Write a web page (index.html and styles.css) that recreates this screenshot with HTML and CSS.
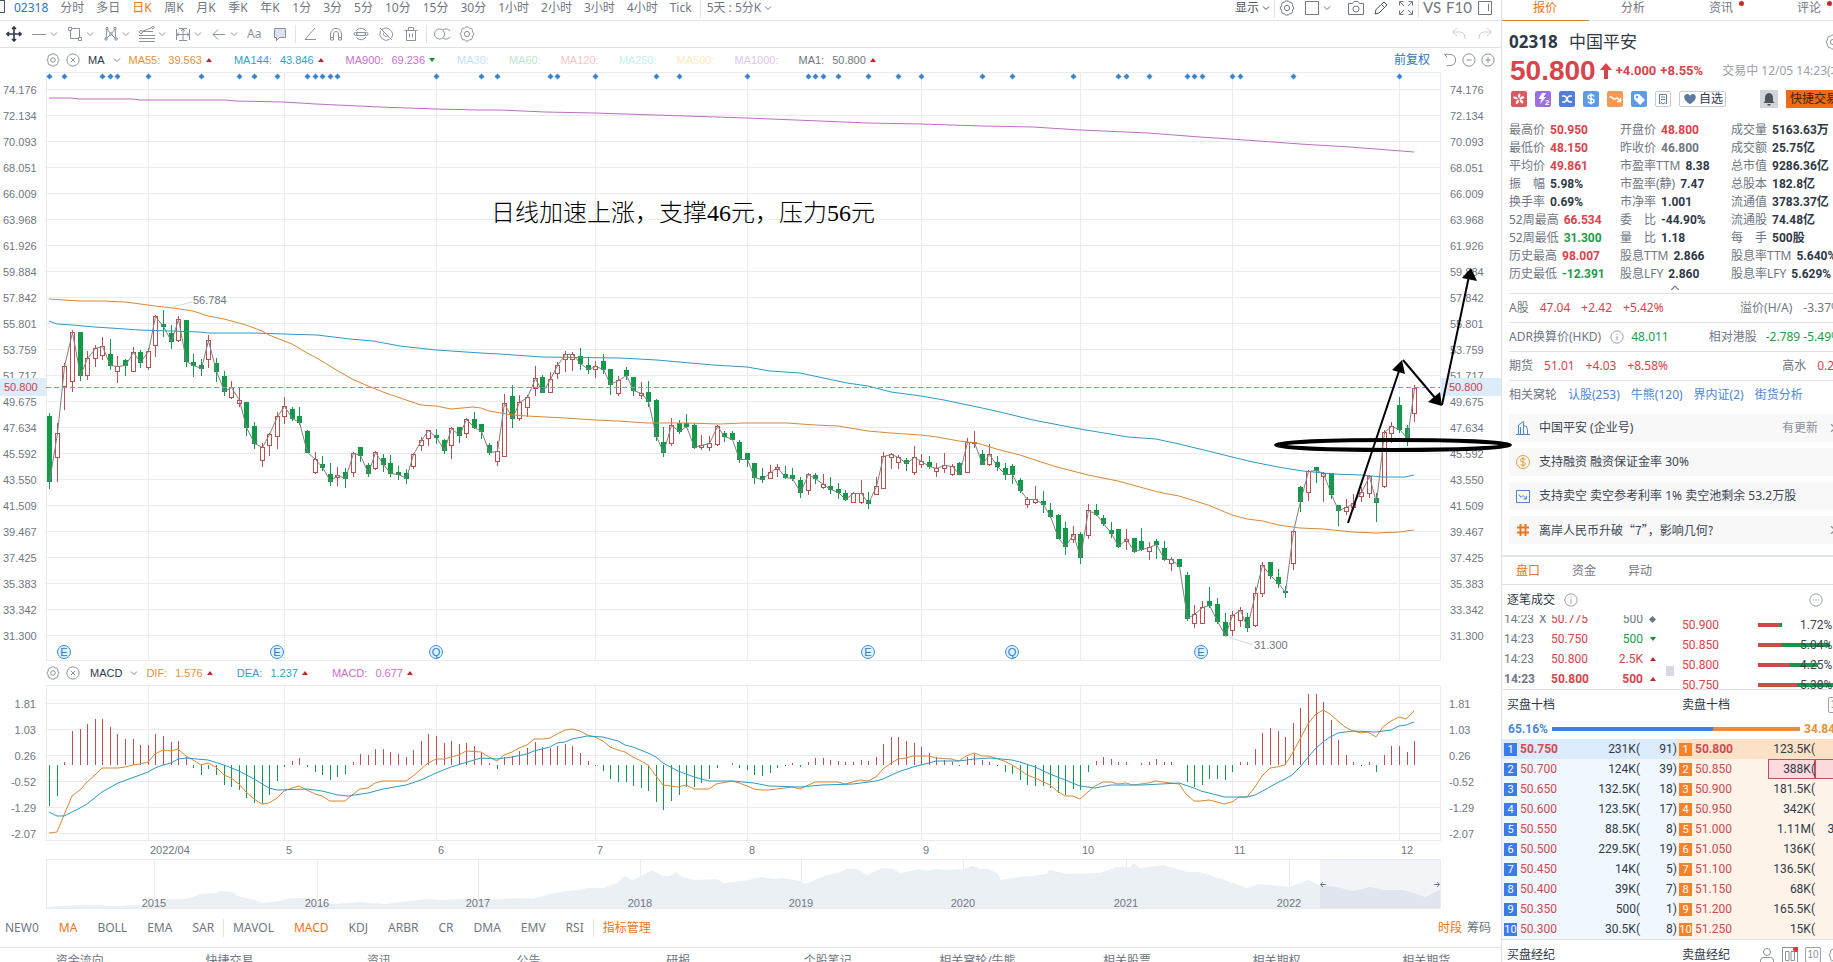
FILE: index.html
```
<!DOCTYPE html>
<html lang="zh-CN">
<head>
    <meta charset="UTF-8">
    <meta name="viewport" content="width=device-width, initial-scale=1.0">
    <title>02318 中国平安</title>
    <link rel="stylesheet" href="styles.css">
</head>
<body>

    <!-- Icones reutilizados -->
    <svg class="symbols" aria-hidden="true">
        <symbol id="i-chev" viewBox="0 0 8 8"><path d="M1 2.500 4 5.500 7 2.500"/></symbol>
        <symbol id="i-gear" viewBox="0 0 16 16"><path d="M5.500 2.200 6.800 1h2.400l1.300 1.200 1.800.1 1.200 2 .1 1.600L15 8l-1.400 2.100-.1 1.600-1.200 2-1.800.1L9.200 15H6.800l-1.300-1.200-1.800-.1-1.200-2-.1-1.600L1 8l1.400-2.100.1-1.600 1.200-2z"/><circle cx="8" cy="8" r="2.600"/></symbol>
        <symbol id="i-close" viewBox="0 0 16 16"><circle cx="8" cy="8" r="7"/><path d="M5.500 5.500l5 5M10.500 5.500l-5 5"/></symbol>
        <symbol id="i-info" viewBox="0 0 16 16"><circle cx="8" cy="8" r="7"/><path d="M8 4v1.500M8 7v5"/></symbol>
        <symbol id="i-panel" viewBox="0 0 16 16"><path d="M1.500 1.500h13v13h-13zM11.500 4v7"/></symbol>
    </svg>

    <div class="app">
        <main class="chart-side">

            <nav class="periods">
                <span class="edge"></span>
                <a class="code" href="#">02318</a>
                <a href="#">分时</a><a href="#">多日</a><a class="k on" href="#">日K</a><a class="k" href="#">周K</a><a class="k" href="#">月K</a><a class="k" href="#">季K</a><a class="k" href="#">年K</a><a href="#">1分</a><a href="#">3分</a><a href="#">5分</a><a href="#">10分</a><a href="#">15分</a><a href="#">30分</a><a href="#">1小时</a><a href="#">2小时</a><a href="#">3小时</a><a href="#">4小时</a><a href="#">Tick</a>
                <i class="sep"></i>
                <a class="days" href="#">5天 : 5分K <svg class="chev"><use href="#i-chev"/></svg></a>
                <div class="view-tools">
                    <button class="pair dark">显示 <svg class="chev"><use href="#i-chev"/></svg></button>
                    <i class="sep"></i>
                    <button aria-label="设置"><svg><use href="#i-gear"/></svg></button>
                    <button class="pair" aria-label="窗口"><svg viewBox="0 0 16 16"><path d="M1.500 1.500h13v13h-13z"/></svg><svg class="chev"><use href="#i-chev"/></svg></button>
                    <button class="camera" aria-label="截图"><svg viewBox="0 0 16 16"><path d="M.5 3.500h4l1.500-2h4l1.500 2h4v11H.5z"/><circle cx="8" cy="9" r="3"/></svg></button>
                    <button class="dark" aria-label="画图"><svg viewBox="0 0 16 16"><path d="M2 14l1-4.500L11 2l3 3-8 8zM8.500 4.500l3 3"/></svg></button>
                    <button aria-label="全屏"><svg viewBox="0 0 16 16"><path d="M1.500 5.500v-4h4M2 2l4 4M10.500 1.500h4v4M14 2l-4 4M1.500 10.500v4h4M2 14l4-4M14.500 10.500v4h-4M14 14l-4-4"/></svg></button>
                    <i class="sep"></i>
                    <button class="big">VS</button>
                    <button class="big">F10</button>
                    <button aria-label="侧栏"><svg><use href="#i-panel"/></svg></button>
                </div>
            </nav>

            <div class="draw-tools">
                <button class="dark" aria-label="移动"><svg viewBox="0 0 16 16"><path stroke-width="1.600" d="M8 1v14M1 8h14M6 3l2-2 2 2M6 13l2 2 2-2M3 6 1 8l2 2M13 6l2 2-2 2"/></svg></button>
                <button class="pair" aria-label="直线"><svg viewBox="0 0 16 16"><path d="M1 8.500h14"/></svg><svg class="chev"><use href="#i-chev"/></svg></button>
                <button class="pair" aria-label="矩形"><svg viewBox="0 0 16 16"><path d="M3.500 2.500h9v10h-9z"/><path class="node" d="M1.500 1.500h3v3h-3zM11.500 11.500h3v3h-3z"/></svg><svg class="chev"><use href="#i-chev"/></svg></button>
                <button class="pair" aria-label="形态"><svg viewBox="0 0 16 16"><path d="M3 13 4 3l4 5 4-5 1 10-5-5z"/><path class="node" d="M3 1.500h2v2H3zM11 1.500h2v2h-2zM2 12h2v2H2zM12 12h2v2h-2zM7 7h2v2H7z"/></svg><svg class="chev"><use href="#i-chev"/></svg></button>
                <button class="pair" aria-label="斐波那契"><svg viewBox="0 0 16 16"><path d="M3 5.500 13 1.500M0 9.500h16M0 12.500h16M0 15.500h16M4 5.500h10"/><circle cx="2" cy="6" r="1.500"/><circle cx="14" cy="1.500" r="1.300"/></svg><svg class="chev"><use href="#i-chev"/></svg></button>
                <button class="pair" aria-label="测量"><svg viewBox="0 0 16 16"><path d="M1.500 3v11M14.500 3v11M2 8.500h12M8 2v12M4 2.500h8M4 14.500h8M6 5l2-2 2 2M12 6.500l2 2-2 2M4 6.500l-2 2 2 2"/></svg><svg class="chev"><use href="#i-chev"/></svg></button>
                <button class="pair" aria-label="箭头"><svg viewBox="0 0 16 16"><path d="M14 8.500H2M7 3.500l-5 5 5 5"/></svg><svg class="chev"><use href="#i-chev"/></svg></button>
                <button class="aa">Aa</button>
                <button aria-label="批注"><svg viewBox="0 0 16 16"><path class="bubble" d="M2.500 2.500h11v9h-6L4.500 14.500v-3h-2z"/></svg></button>
                <i class="sep"></i>
                <button aria-label="角度"><svg viewBox="0 0 16 16"><path d="M12 2 2 13.500h11"/></svg></button>
                <button aria-label="磁铁"><svg viewBox="0 0 16 16"><path d="M2.500 14V8a5.500 5.500 0 0 1 11 0v6h-3V8a2.500 2.500 0 0 0-5 0v6zM2.500 11.500h3M10.500 11.500h3"/></svg></button>
                <button aria-label="连续画图"><svg viewBox="0 0 16 16"><path d="M3 5a6 6 0 0 1 10 0M13 11A6 6 0 0 1 3 11M3.500 6.500h9v3h-9z"/><circle cx="2.500" cy="8" r="1.500"/><circle cx="13.500" cy="8" r="1.500"/></svg></button>
                <button aria-label="隐藏"><svg viewBox="0 0 16 16"><path d="M4 3.500a6.500 6.500 0 0 1 9.500 8.500M11.500 13.500A6.500 6.500 0 0 1 2.500 5M2 2l12 12M6 6.500a2.500 2.500 0 0 0 3.500 3.500"/></svg></button>
                <button aria-label="删除"><svg viewBox="0 0 16 16"><path d="M1.500 4.500h13M5.500 4V1.500h5V4M3.500 5v9.500h9V5M6.500 7.500v4M9.500 7.500v4"/></svg></button>
                <i class="sep"></i>
                <button aria-label="对比"><svg viewBox="0 0 16 16"><circle cx="5.500" cy="8" r="5"/><path d="M9 4a5 5 0 1 1 0 8"/></svg></button>
                <button aria-label="画图设置"><svg><use href="#i-gear"/></svg></button>
                <div class="history">
                    <button aria-label="撤销"><svg viewBox="0 0 16 16"><path d="M6 2 1.500 6 6 10M2 6h7q5 0 5 7"/></svg></button>
                    <button aria-label="重做"><svg viewBox="0 0 16 16"><path d="M10 2l4.500 4L10 10M14 6H7q-5 0-5 7"/></svg></button>
                </div>
            </div>

            <div class="legend">
                <button aria-label="指标设置"><svg><use href="#i-gear"/></svg></button>
                <button aria-label="关闭指标"><svg><use href="#i-close"/></svg></button>
                <button class="pick">MA <svg class="chev"><use href="#i-chev"/></svg></button>
                <span class="val orange">MA55: <b>39.563</b><i class="up"></i></span>
                <span class="val cyan">MA144: <b>43.846</b><i class="up"></i></span>
                <span class="val violet">MA900: <b>69.236</b><i class="down"></i></span>
                <span class="val faded ma30">MA30:</span>
                <span class="val faded ma60">MA60:</span>
                <span class="val faded ma120">MA120:</span>
                <span class="val faded ma250">MA250:</span>
                <span class="val faded ma500">MA500:</span>
                <span class="val faded ma1000">MA1000:</span>
                <span class="val">MA1: <b>50.800</b><i class="up"></i></span>
                <div class="zoom-tools">
                    <a href="#">前复权</a>
                    <button aria-label="还原"><svg viewBox="0 0 16 16"><path d="M2 1.500h6a6 6 0 0 1 0 13H4M5 5 1.500 1.500"/></svg></button>
                    <button aria-label="缩小"><svg viewBox="0 0 16 16"><circle cx="8" cy="8" r="7"/><path d="M5 8h6"/></svg></button>
                    <button aria-label="放大"><svg viewBox="0 0 16 16"><circle cx="8" cy="8" r="7"/><path d="M5 8h6M8 5v6"/></svg></button>
                </div>
            </div>

            <svg id="price" class="plot" viewBox="0 72 1501 589"></svg>

            <div class="legend macd">
                <button aria-label="指标设置"><svg><use href="#i-gear"/></svg></button>
                <button aria-label="关闭指标"><svg><use href="#i-close"/></svg></button>
                <button class="pick">MACD <svg class="chev"><use href="#i-chev"/></svg></button>
                <span class="val orange">DIF: <b>1.576</b><i class="up"></i></span>
                <span class="val cyan">DEA: <b>1.237</b><i class="up"></i></span>
                <span class="val violet">MACD: <b>0.677</b><i class="up"></i></span>
            </div>

            <svg id="macd" class="plot" viewBox="0 685 1501 224"></svg>

            <nav class="indicators">
                <a href="#">NEW0</a><a class="on" href="#">MA</a><a href="#">BOLL</a><a href="#">EMA</a><a href="#">SAR</a>
                <i class="sep"></i>
                <a href="#">MAVOL</a><a class="on" href="#">MACD</a><a href="#">KDJ</a><a href="#">ARBR</a><a href="#">CR</a><a href="#">DMA</a><a href="#">EMV</a><a href="#">RSI</a>
                <i class="sep"></i>
                <a class="on" href="#">指标管理</a>
                <span class="range"><a class="on" href="#">时段</a><a href="#">筹码</a></span>
            </nav>

            <nav class="bottom-tabs">
                <a href="#">资金流向</a><a href="#">快捷交易</a><a href="#">资讯</a><a href="#">公告</a><a href="#">研报</a><a href="#">个股笔记</a><a href="#">相关窝轮/牛熊</a><a href="#">相关股票</a><a href="#">相关期权</a><a href="#">相关期货</a>
            </nav>
        </main>

        <aside class="quote">
          <div class="quote-body">
            <nav class="quote-tabs">
                <a class="on" href="#">报价</a><a href="#">分析</a><a class="dot" href="#">资讯</a><a class="dot" href="#">评论</a>
            </nav>

            <header class="stock">
                <h1>02318 <span>中国平安</span></h1>
                <button aria-label="报价设置"><svg><use href="#i-gear"/></svg></button>
            </header>

            <div class="last">
                <strong>50.800</strong>
                <svg class="rise" viewBox="0 0 12 16"><path d="M6 0l6 7H8v9H4V7H0z"/></svg>
                <b>+4.000</b><b>+8.55%</b>
                <time>交易中 12/05 14:23(北京)</time>
            </div>

            <div class="badges">
                <svg class="b-red" viewBox="0 0 16 16"><path class="fill" d="M8 7.500C6 5 7 3 9 2.500c1 1.500 0 3.500-1 5zM8.500 8c1-3 3.500-3.500 5-2-.5 2-3 2.500-5 2zM8.500 8.500c3 0 4.500 2 3.500 4-2 0-3.500-2-3.500-4zM7.500 8.500c1 3-.5 4.500-2.500 4.500-.5-2 .5-4 2.500-4.500zM7 8C4 9 2 7.500 2.500 5.500c2-.5 4 1 4.500 2.500z"/></svg>
                <svg class="b-violet" viewBox="0 0 16 16"><path class="fill" d="M7 2h4L8.500 6H11l-6 7 1.500-5H3.500z"/><text x="10" y="14">2</text></svg>
                <svg class="b-blue" viewBox="0 0 16 16"><path stroke-width="1.500" d="M3 5h2q2 0 3 3t3 3h2M3 11h2q2 0 3-3t3-3h2"/></svg>
                <svg class="b-sky" viewBox="0 0 16 16"><path stroke-width="1.500" d="M11 5.500Q10.500 4 8 4 5 4 5 6t3 2 3 2-3 2Q5.500 12 5 10.500M8 2.500v11"/></svg>
                <svg class="b-orange" viewBox="0 0 16 16"><path stroke-width="1.500" d="M2.500 6.500Q4 5 5 6.500T8 8l2-1 3.500 3M13.500 7v3.500H10"/></svg>
                <svg class="b-sky" viewBox="0 0 16 16"><path class="fill" d="M3 3.500 8 3l6 6-5 5-6-6z"/><circle class="hole" cx="6" cy="6" r="1.200"/></svg>
                <svg class="b-plain" viewBox="1 1 14 14"><path d="M4.500 3.500h7v9.500l-1.500-1.500-2 1.500-2-1.500L4.500 13zM6 6h4M6 8.500h4"/></svg>
                <button class="fav"><svg viewBox="0 0 16 16"><path d="M8 14C2 10 1 7 1.500 5 2.500 1.500 6.500 1.500 8 4.500 9.500 1.500 13.500 1.500 14.500 5c.5 2-.5 5-6.500 9z"/></svg>自选</button>
                <button class="bell" aria-label="提醒"><svg viewBox="0 0 16 16"><path d="M8 2q4 .5 4 5v3l1.500 2h-11L4 10V7q0-4.500 4-5zM6.500 13h3v1.500h-3z"/></svg></button>
                <button class="trade">快捷交易</button>
            </div>

            <dl class="stats">
                <div><dt>最高价</dt><dd class="red">50.950</dd></div><div><dt>开盘价</dt><dd class="red">48.800</dd></div><div><dt>成交量</dt><dd>5163.63万</dd></div>
                <div><dt>最低价</dt><dd class="red">48.150</dd></div><div><dt>昨收价</dt><dd class="grey">46.800</dd></div><div><dt>成交额</dt><dd>25.75亿</dd></div>
                <div><dt>平均价</dt><dd class="red">49.861</dd></div><div><dt>市盈率TTM</dt><dd>8.38</dd></div><div><dt>总市值</dt><dd>9286.36亿</dd><dd><svg><use href="#i-info"/></svg></dd></div>
                <div><dt>振　幅</dt><dd>5.98%</dd></div><div><dt>市盈率(静)</dt><dd>7.47</dd></div><div><dt>总股本</dt><dd>182.8亿</dd></div>
                <div><dt>换手率</dt><dd>0.69%</dd></div><div><dt>市净率</dt><dd>1.001</dd></div><div><dt>流通值</dt><dd>3783.37亿</dd><dd><svg><use href="#i-info"/></svg></dd></div>
                <div><dt>52周最高</dt><dd class="red">66.534</dd></div><div><dt>委　比</dt><dd>-44.90%</dd></div><div><dt>流通股</dt><dd>74.48亿</dd></div>
                <div><dt>52周最低</dt><dd class="green">31.300</dd></div><div><dt>量　比</dt><dd>1.18</dd></div><div><dt>每　手</dt><dd>500股</dd></div>
                <div><dt>历史最高</dt><dd class="red">98.007</dd></div><div><dt>股息TTM</dt><dd>2.866</dd></div><div><dt>股息率TTM</dt><dd>5.640%</dd></div>
                <div><dt>历史最低</dt><dd class="green">-12.391</dd></div><div><dt>股息LFY</dt><dd>2.860</dd></div><div><dt>股息率LFY</dt><dd>5.629%</dd></div>
            </dl>
            <button class="fold" aria-label="收起"><svg class="chev"><use href="#i-chev"/></svg></button>

            <div class="line">A股 <span class="red">47.04</span><span class="red">+2.42</span><span class="red">+5.42%</span><span class="end">溢价(H/A)</span><span>-3.37%</span></div>
            <div class="line adr">ADR换算价(HKD) <svg><use href="#i-info"/></svg><span class="green">48.011</span><span class="end">相对港股</span><span class="green">-2.789 -5.49%</span></div>
            <div class="line">期货 <span class="red">51.01</span><span class="red">+4.03</span><span class="red">+8.58%</span><span class="end">高水</span><span class="red">0.21</span></div>
            <div class="line warrants">相关窝轮 <a href="#">认股(253)</a><a href="#">牛熊(120)</a><a href="#">界内证(2)</a><a href="#">街货分析</a></div>

            <ul class="cards">
                <li><svg class="blue" viewBox="0 0 16 16"><path d="M1 14.500h14M3.500 14V5l5-3.500V14M8.500 5.500q4 0 4 4V14M5.500 7v7"/></svg>中国平安 (企业号)<span>有更新</span><svg class="chev next"><use href="#i-chev"/></svg></li>
                <li><svg class="gold" viewBox="0 0 16 16"><circle cx="8" cy="8" r="6.500"/><path d="M10.500 6Q10 4.500 8 4.500 5.500 4.500 5.500 6.200T8 8t2.500 1.800T8 11.500q-2 0-2.500-1.500M8 3v10"/></svg>支持融资 融资保证金率 30%</li>
                <li><svg class="blue" viewBox="0 0 16 16"><path d="M1.500 2.500h13v12h-13zM4 6.500l2 3 2-2 3.500 3.500M11.500 8v3h-3"/></svg>支持卖空 卖空参考利率 1% 卖空池剩余 53.2万股</li>
                <li class="topic"><svg class="hash" viewBox="0 0 16 16"><path d="M5.500 2v12M10.500 2v12M2 5.500h12M2 10.500h12"/></svg>离岸人民币升破“7”，影响几何?<svg class="chev next"><use href="#i-chev"/></svg></li>
            </ul>

            <nav class="book-tabs"><a class="on" href="#">盘口</a><a href="#">资金</a><a href="#">异动</a></nav>

            <h2 class="head">逐笔成交 <svg><use href="#i-info"/></svg><svg class="more" viewBox="0 0 16 16"><circle cx="8" cy="8" r="7"/><path d="M4.500 8h1M7.500 8h1M10.500 8h1"/></svg></h2>

            <div class="deals">
                <table class="ticks">
                    <tr><td>14:23</td><td>X</td><td class="red">50.775</td><td>500</td><td><i class="flat"></i></td></tr>
                    <tr><td>14:23</td><td></td><td class="red">50.750</td><td class="green">500</td><td><i class="down"></i></td></tr>
                    <tr><td>14:23</td><td></td><td class="red">50.800</td><td class="red">2.5K</td><td><i class="up"></i></td></tr>
                    <tr class="bold"><td>14:23</td><td></td><td class="red">50.800</td><td class="red">500</td><td><i class="up"></i></td></tr>
                </table>
                <i class="thumb"></i>
                <table class="levels">
                    <tr><td class="red">50.900</td><td><i class="bar" style="--r:21px;--g:3px"></i></td><td>1.72%</td></tr>
                    <tr><td class="red">50.850</td><td><i class="bar" style="--r:24px;--g:48px"></i></td><td>5.04%</td></tr>
                    <tr><td class="red">50.800</td><td><i class="bar" style="--r:32px;--g:28px"></i></td><td>4.25%</td></tr>
                    <tr><td class="red">50.750</td><td><i class="bar" style="--r:39px;--g:37px"></i></td><td>5.38%</td></tr>
                </table>
            </div>

            <div class="halves"><h2>买盘十档</h2><h2>卖盘十档</h2><span class="lv">10</span></div>
            <div class="ratio"><b class="blue">65.16%</b><i class="buy" style="flex-grow:65"></i><i class="sell" style="flex-grow:35"></i><b class="orange">34.84%</b></div>

            <div class="book">
                <table class="bids" id="bids"></table>
                <table class="asks" id="asks"></table>
            </div>

            <div class="halves brokers"><h2>买盘经纪</h2><h2>卖盘经纪</h2>
                <div class="broker-tools">
                    <svg viewBox="0 0 16 16"><circle cx="8" cy="5" r="3.500"/><path d="M1.500 15.500v-2q0-3 3-3h7q3 0 3 3v2z"/></svg>
                    <svg class="boxed" viewBox="0 0 16 16"><path d="M.5.500h15v15H.5zM3.500 4.500h3.500v9H3.500zM9 4.500h3.500v9H9z"/><circle class="alert" cx="14" cy="2" r="3"/></svg>
                    <span class="lv">10</span>
                    <svg><use href="#i-gear"/></svg>
                </div>
            </div>
          </div>
        </aside>
    </div>

    <script src="chart.js"></script>
</body>
</html>
```
FILE: styles.css
```
* {
    box-sizing: border-box;
}
body {
    margin: 0;
    height: 100vh;
    overflow: hidden;
    font-family: "Noto Sans", "Noto Sans CJK SC", sans-serif;
    font-size: 12px;
    line-height: 16px;
    color: #6f7782;
    background: #fff;
}
a {
    color: inherit;
    text-decoration: none;
}
button {
    padding: 0;
    border: 0;
    background: none;
    font: inherit;
    color: inherit;
    display: flex;
    align-items: center;
    cursor: pointer;
}
svg {
    width: 16px;
    height: 16px;
    flex: none;
    fill: none;
    stroke: currentColor;
}
h1, h2, ul, dl, dd {
    margin: 0;
    padding: 0;
}
h2 {
    font-size: 12px;
    font-weight: normal;
    color: #2f3946;
}
.symbols {
    position: absolute;
    width: 0;
    height: 0;
}
.chev {
    width: 8px;
    height: 8px;
}
.sep {
    width: 1px;
    height: 18px;
    background: #dfe4ea;
    flex: none;
}
.on {
    color: #ee7420;
}
.red { color: #d9434a; }
.green { color: #1a9c4b; }
.orange { color: #e5923a; }
.cyan { color: #35a0c4; }
.violet { color: #cc6fcc; }
.blue { color: #4a86d8; }
.dark { color: #2f3946; }
.app {
    display: flex;
    height: 100%;
    white-space: nowrap;
}
.chart-side {
    flex: 1;
    min-width: 0;
}

/* barras superiores */
.periods {
    display: flex;
    gap: 12px;
    height: 21px;
    line-height: 15px;
    border-bottom: 1px solid #dfe3e8;
}
.edge {
    width: 5px;
    height: 13px;
    margin-right: -3px;
    border: 1px solid #4b5563;
    border-left: 0;
}
.periods .code {
    color: #2d74c4;
}
.k {
    width: 20px;
}
.periods > .sep {
    margin: 0 -6px 0 -4px;
}
.view-tools {
    display: flex;
    gap: 9px;
    height: 15px;
    margin-left: auto;
    padding-right: 8px;
}
.view-tools .sep {
    margin: 0 -5px;
}
.view-tools .dark {
    color: #4b5563;
}
.camera {
    margin-left: 8px;
}
.big {
    font-family: Lato, sans-serif;
    font-size: 15px;
    margin-right: -4px;
}
.pair {
    gap: 3px;
}
.draw-tools {
    display: flex;
    align-items: center;
    gap: 9px;
    height: 27px;
    padding: 0 8px 0 6px;
    border-bottom: 1px solid #dfe3e8;
    color: #8a929c;
}
.draw-tools .sep {
    margin: 0 -2px;
}
.aa {
    width: 16px;
}
.node {
    fill: #fff;
}
.bubble {
    fill: #dde3ea;
}
.history {
    display: flex;
    gap: 10px;
    margin-left: auto;
    color: #c8cdd4;
}

/* legendas dos indicadores */
.legend {
    display: flex;
    align-items: center;
    height: 24px;
    padding: 0 6px 0 46px;
    font-family: "Liberation Sans", "Noto Sans CJK SC", sans-serif;
    font-size: 11px;
}
.legend svg {
    width: 14px;
    height: 14px;
    margin-right: 6px;
    color: #7a8390;
}
.legend .pick {
    color: #2f3946;
    margin-right: 2px;
    margin-left: 2px;
}
.legend .chev {
    width: 8px;
    margin-left: 8px;
}
.val {
    display: flex;
    align-items: center;
    margin-right: 22px;
}
.faded {
    margin-right: 20px;
}
.val b {
    font-weight: normal;
    margin: 0 4px 0 8px;
}
.macd .pick {
    margin-left: 4px;
}
.macd .val {
    margin-right: 24px;
}
.up, .down {
    width: 0;
    border: 3px solid transparent;
}
.up {
    border-top: 0;
    border-bottom: 4px solid #c4242c;
}
.down {
    border-bottom: 0;
    border-top: 4px solid #12902c;
}
.ma30 { color: #c4dff5; }
.ma60 { color: #bfe5cc; }
.ma120 { color: #f6c6c6; }
.ma250 { color: #bff0ee; }
.ma500 { color: #f9eac0; }
.ma1000 { color: #dcc6ef; }
.zoom-tools {
    display: flex;
    align-items: center;
    gap: 5px;
    margin-left: auto;
}
.zoom-tools a {
    font-size: 12px;
    color: #2d74c4;
    margin-right: 8px;
}
.zoom-tools svg {
    margin: 0;
}

/* graficos */
.plot {
    display: block;
    position: relative;
    z-index: 1;
    width: 100%;
    height: auto;
    overflow: visible;
    stroke: none;
    font-family: "Liberation Sans", sans-serif;
    font-size: 11px;
}
.plot text { fill: #6f7782; stroke: none; }
.plot .mid { text-anchor: middle; }
.grid { stroke: #e9ecef; shape-rendering: crispEdges; }
.candle-up { stroke: #bd4f50; fill: #fff; shape-rendering: crispEdges; }
.candle-down { stroke: #14984a; fill: #14984a; shape-rendering: crispEdges; }
.ma-close { stroke: #808080; }
.ma-55 { stroke: #dd8732; }
.ma-144 { stroke: #2c9ac4; }
.ma-900 { stroke: #be6fc2; }
.now-line { stroke: #d08a3c; stroke-dasharray: 5 3; shape-rendering: crispEdges; }
.now-box { fill: #dcecfb; }
.plot .now { fill: #d33b4c; }
.diamond { fill: #3a86d2; }
.event circle { fill: #dff1fd; stroke: #3a8fd6; }
.event text { fill: #2d7cc8; text-anchor: middle; }
.leader { stroke: #d5d9dd; }
.plot .note {
    font-family: "Liberation Serif", "Noto Sans CJK SC", serif;
    font-size: 24px;
    font-weight: 300;
    fill: #000;
}
.ink { stroke: #000; stroke-width: 2; }
.ink-head { fill: #000; }
.ring { stroke: #000; stroke-width: 4; }
.area { fill: #ebf0f5; }
.brush { fill: #8892b0; fill-opacity: .1; }
.handle { stroke: #67758c; }

/* rodape */
.indicators {
    display: flex;
    align-items: center;
    gap: 20px;
    height: 39px;
    padding: 0 10px 0 5px;
    border-bottom: 1px solid #dfe3e8;
}
.indicators .sep {
    margin: 0 -11px;
}
.range {
    display: flex;
    gap: 5px;
    margin-left: auto;
}
.bottom-tabs {
    display: flex;
    padding: 5px 0 0 5px;
}
.bottom-tabs a {
    flex: 1;
    text-align: center;
}

/* painel de cotacao */
.quote {
    flex: 0 0 332px;
    overflow: hidden;
    border-left: 1px solid #dfe3e8;
}
.quote-body {
    width: 352px;
}
.quote-tabs {
    display: flex;
    height: 21px;
    line-height: 15px;
    border-bottom: 1px solid #dfe3e8;
}
.quote-tabs a {
    position: relative;
    width: 88px;
    height: 21px;
    margin-left: -1px;
    text-align: center;
}
.quote-tabs a + a {
    margin-left: 0;
}
.quote-tabs .on {
    border-bottom: 1px solid #d98030;
}
.dot::after {
    content: "";
    position: absolute;
    left: 62px;
    top: 1px;
    width: 5px;
    height: 5px;
    border-radius: 50%;
    background: #cc2a2a;
}
.stock {
    display: flex;
    justify-content: space-between;
    align-items: center;
    height: 34px;
    padding: 8px 13px 0 7px;
    color: #8a929c;
}
h1 {
    font-size: 17px;
    line-height: 24px;
    color: #2f3946;
}
h1 span {
    font-weight: normal;
    margin-left: 7px;
}
.last {
    display: flex;
    align-items: center;
    height: 32px;
    padding-left: 8px;
    color: #d9434a;
    font-family: Roboto, sans-serif;
}
.last strong {
    font: bold 28px "Liberation Sans", sans-serif;
}
.rise {
    width: 12px;
    margin: 0 4px;
    fill: #d9434a;
    stroke: none;
}
.last b {
    font-size: 13px;
    margin-right: 4px;
}
.last time {
    margin-left: 15px;
    font-family: "Noto Sans", "Noto Sans CJK SC", sans-serif;
    color: #9aa2ad;
}
.badges {
    display: flex;
    align-items: center;
    gap: 8px;
    height: 24px;
    padding-left: 9px;
}
.badges svg {
    border-radius: 2px;
    color: #fff;
}
.badges > svg .fill {
    fill: #fff;
    stroke: none;
}
.badges text {
    font: bold 8px "Liberation Sans", sans-serif;
    fill: #fff;
    stroke: none;
}
.b-red { background: #dc5a5c; }
.b-violet { background: #9a6fe0; }
.b-blue { background: #4f7edc; }
.b-sky { background: #5b9be8; }
.b-orange { background: #f59a55; }
.hole { fill: #5b9be8; stroke: none; }
.badges .b-plain {
    color: #6a7f9c;
    border: 1px solid #c5ccd5;
}
.fav {
    height: 16px;
    padding: 0 2px 0 3px;
    border: 1px solid #c5ccd5;
    border-radius: 2px;
    color: #2f3946;
}
.badges .fav svg {
    width: 14px;
    margin-right: 2px;
    fill: #5c7a9f;
    stroke: none;
}
.bell {
    width: 18px;
    height: 18px;
    margin-left: 26px;
    padding-left: 1px;
    background: #d3d5da;
}
.badges .bell svg {
    fill: #4b535e;
    stroke: none;
}
.trade {
    height: 18px;
    padding: 0 4px;
    background: #f26a12;
    color: #3c2412;
}
.stats {
    display: grid;
    grid-template-columns: repeat(3, 111px);
    padding: 10px 0 0 7px;
    line-height: 18px;
}
.stats div {
    display: flex;
    align-items: center;
    gap: 5px;
    height: 18px;
}
.stats dd {
    font-family: Roboto, "Noto Sans CJK SC", sans-serif;
    font-weight: bold;
    color: #2f3946;
}
.stats svg {
    display: block;
    width: 14px;
    height: 14px;
    color: #8a929c;
}
.stats .red { color: #d9434a; }
.stats .green { color: #1a9c4b; }
.stats .grey { color: #6f7782; }
.fold {
    width: 331px;
    height: 10px;
    justify-content: center;
}
.fold .chev {
    width: 10px;
    height: 10px;
    margin-left: 14px;
    transform: rotate(180deg);
}
.line {
    display: flex;
    align-items: center;
    gap: 11px;
    height: 29px;
    margin-left: 7px;
    padding-right: 13px;
    border-top: 1px solid #dfe3e8;
}
.line .end {
    margin-left: auto;
}
.adr {
    gap: 9px;
}
.adr svg {
    width: 14px;
    margin-right: -2px;
    color: #8a929c;
}
.line a {
    color: #4a86d8;
}
.cards {
    display: grid;
    gap: 6px;
    margin: 5px 0 11px 7px;
    list-style: none;
    color: #3b4450;
}
.cards li {
    display: flex;
    align-items: center;
    height: 28px;
    padding: 0 16px 0 6px;
    background: #f8f8f9;
}
.cards svg {
    margin-right: 8px;
}
.cards span {
    margin-left: auto;
    margin-right: 10px;
    color: #8a929c;
}
.cards .next {
    width: 10px;
    height: 10px;
    margin-left: auto;
    margin-right: 0;
    transform: rotate(-90deg);
    color: #8a929c;
}
.cards span + .next {
    margin-left: 0;
}
.topic {
    font-family: "Noto Sans CJK SC", sans-serif;
}
.gold { color: #e0a13c; }
.cards .hash {
    color: #ee7420;
    stroke-width: 2;
}
.book-tabs {
    display: flex;
    align-items: center;
    gap: 32px;
    height: 30px;
    padding-left: 14px;
    border-top: 2px solid #e2e4ec;
    border-bottom: 1px solid #dfe3e8;
}
.head {
    display: flex;
    align-items: center;
    height: 30px;
    padding-left: 5px;
}
.head svg {
    width: 14px;
    margin-left: 9px;
    color: #8a929c;
}
.head .more {
    margin-left: auto;
    margin-right: 31px;
}

/* negocios e livro de ofertas */
table {
    border-collapse: collapse;
    table-layout: fixed;
    font-family: Roboto, sans-serif;
}
td {
    height: 20px;
    padding: 0;
}
.deals {
    display: flex;
    height: 75px;
    overflow: hidden;
    border-bottom: 1px solid #dfe3e8;
}
.ticks {
    width: 162px;
    height: 80px;
    margin: -6px 0 0 2px;
}
.ticks td:nth-child(1) { width: 35px; }
.ticks td:nth-child(2) { width: 12px; }
.ticks td:nth-child(3) { width: 47px; }
.ticks td:nth-child(4) { width: 45px; text-align: right; }
.ticks td:nth-child(5) { padding-left: 7px; }
.ticks i {
    display: block;
}
.bold {
    font-weight: bold;
}
.flat {
    width: 5px;
    height: 5px;
    background: #6f7782;
    transform: rotate(45deg);
}
.thumb {
    width: 8px;
    height: 10px;
    margin-top: 51px;
    background: #d5dbe3;
}
.levels {
    width: 172px;
    height: 80px;
    margin-left: 8px;
    color: #3b4450;
}
.levels td:nth-child(1) { width: 76px; }
.levels td:nth-child(2) { width: 42px; }
.levels td:nth-child(3) { position: relative; }
.bar {
    display: block;
    width: calc(var(--r) + var(--g));
    height: 4px;
    background: linear-gradient(to right, #cc4b4b var(--r), #1a9448 var(--r));
}
.halves {
    display: flex;
    align-items: center;
    height: 29px;
    padding-left: 5px;
}
.halves h2 {
    flex: none;
    width: 175px;
}
.lv {
    flex: none;
    width: 16px;
    height: 16px;
    border: 1px solid #9aa2ad;
    border-radius: 2px;
    font: 10px/14px "Liberation Sans", sans-serif;
    text-align: center;
    color: #8a929c;
}
.halves > .lv {
    margin-left: -29px;
}
.ratio {
    display: flex;
    align-items: center;
    height: 20px;
    padding: 0 10px 0 6px;
    font-family: Roboto, sans-serif;
}
.ratio i {
    flex-basis: 0;
    height: 4px;
}
.ratio b:first-child {
    margin-right: 4px;
}
.ratio b:last-child {
    margin-left: 4px;
}
.buy { background: #4180d8; }
.sell { background: #e98a3c; }
.book {
    display: flex;
    border-bottom: 1px solid #dfe3e8;
}
.book table {
    width: 175px;
    color: #2f3946;
}
.bids { background: #f0f7fe; }
.asks { background: #fef3e9; }
.bids tr:first-child { background: #dbebfb; }
.asks tr:first-child { background: #fde1c7; }
.book tr:first-child .px {
    font-weight: bold;
}
.book td {
    text-align: right;
}
.book .no {
    width: 18px;
    padding-left: 2px;
    text-align: left;
}
.no span {
    display: block;
    width: 13px;
    height: 13px;
    background: #3b7ce8;
    color: #fff;
    font-size: 11px;
    line-height: 13px;
    text-align: center;
}
.asks .no span {
    background: #f5822a;
}
.book .px {
    width: 73px;
    text-align: left;
    color: #d04a50;
}
.book .qty {
    width: 47px;
}
.book .hit {
    background: #fcdadd;
    box-shadow: inset 0 0 0 1px #c0505a;
}
.brokers {
    height: 30px;
}
.broker-tools {
    display: flex;
    flex: none;
    gap: 7px;
    margin-left: -98px;
    color: #8a929c;
}
.alert {
    fill: #dc3b35;
    stroke: none;
}
```
FILE: chart.js
```
// high open close low, em y do grafico
const candles = `413 416 481 488,423 457 433 481,363 386 366 409,330 381 332 391,332 332 375 380,351 375 358 379,345 358 348 366,337 355 346 359,339 354 365 369,356 371 366 382,
359 360 365 375,347 371 352 371,350 352 362 367,348 367 351 369,315 345 316 356,310 324 326 336,325 333 341 348,316 340 319 341,320 320 361 366,354 362 365 376,
359 365 368 375,335 359 340 367,358 363 371 381,371 376 391 395,381 397 387 398,387 403 400 406,402 402 427 435,422 426 443 448,443 460 447 466,433 445 434 455,
412 436 416 448,397 416 406 423,407 409 418 420,407 416 422 424,430 431 452 452,452 472 459 473,456 464 467 470,463 474 481 485,467 477 475 485,468 472 478 487,
452 472 453 476,447 447 455 461,463 465 473 476,451 468 452 469,454 458 464 471,455 463 473 476,466 472 474 479,469 473 478 483,453 466 454 468,437 445 440 450,
430 438 430 445,429 435 437 443,439 440 450 453,427 445 428 458,427 427 435 442,418 433 419 437,412 419 427 428,424 424 431 438,443 445 452 454,441 461 451 465,
394 456 403 456,385 396 418 427,395 418 402 420,395 407 397 416,366 388 378 395,375 377 392 392,372 392 379 392,362 373 365 378,351 359 354 371,352 359 354 370,
348 356 363 369,357 365 369 373,361 369 366 377,354 361 369 373,369 369 384 394,376 393 380 395,367 370 375 379,377 377 390 395,382 395 393 398,381 392 401 406,
399 400 436 440,427 442 452 456,418 443 425 445,420 423 431 433,414 423 426 427,423 425 447 448,435 447 445 449,436 447 443 450,425 444 426 445,431 433 436 441,
431 433 439 439,440 442 459 462,453 453 459 466,463 463 477 483,468 476 479 482,465 478 472 478,464 469 467 476,466 474 477 478,468 475 478 480,477 480 492 497,
473 490 474 494,473 475 478 483,474 487 484 488,477 486 489 493,483 489 492 498,490 493 499 500,492 502 493 502,480 502 493 503,492 500 503 508,477 494 486 494,
452 488 456 488,453 457 454 468,455 462 457 468,458 460 463 470,446 472 457 474,454 464 461 467,456 462 466 468,463 471 468 476,453 468 465 472,464 474 466 475,
462 463 474 474,438 472 442 472,431 443 442 447,450 454 464 464,444 464 454 465,456 462 466 470,463 468 474 479,464 466 474 483,478 480 490 492,497 504 499 507,
486 502 499 503,491 501 504 512,503 510 516 517,514 515 538 538,522 528 546 554,526 539 534 542,532 534 557 563,504 535 510 538,504 510 514 515,515 518 523 525,
522 530 533 537,529 529 546 547,529 541 539 549,538 538 551 552,528 541 549 550,542 551 547 559,539 541 544 558,541 548 559 560,557 563 559 570,559 559 566 566,
572 575 618 620,605 623 614 627,601 623 607 623,587 601 605 607,598 604 621 623,613 622 635 636,611 630 615 635,607 620 610 626,613 617 627 631,587 625 593 626,
562 593 565 596,562 562 575 578,569 577 583 587,586 591 592 597,530 563 531 569,486 487 501 511,470 492 471 500,467 467 470 482,472 476 473 501,473 473 494 498,
505 505 510 525,499 511 507 514,494 507 503 509,487 496 492 501,475 493 476 497,493 498 502 521,430 486 432 487,422 433 426 442,397 405 429 432,425 428 438 445,
385 413 388 421`.split(',').map(c => c.trim().split(' ').map(Number));

const hist = [-41,-31,3,34,36,41,46,46,38,31,26,26,20,20,31,29,23,24,8,-3,-10,-4,-10,-20,-22,-25,-33,-38,-39,-30,-16,-2,4,7,-2,-7,-10,-15,-12,-9,
    3,11,10,16,16,13,11,8,15,24,31,29,22,24,21,22,19,13,2,-4,8,9,14,17,23,18,17,19,21,19,12,4,-1,-6,-14,-17,-17,-21,-23,-26,
    -37,-45,-36,-30,-22,-22,-18,-14,-3,0,2,-3,-5,-10,-11,-8,-3,-1,2,-2,3,7,7,5,4,3,3,5,4,8,21,28,28,24,22,18,12,8,5,3,
    -1,8,11,5,3,-1,-7,-9,-15,-20,-21,-21,-23,-28,-30,-24,-25,-7,4,8,6,3,3,0,2,3,6,3,3,0,-17,-22,-20,-14,-14,-15,-7,3,3,16,
    32,37,34,28,42,57,71,71,63,45,25,10,3,-1,3,-7,10,19,19,13,24];

const ma55 = '49,299 80,301 102,301 125,302 133,303 155,306 173,308 193,311 208,316 224,319 246,325 262,331 269,335 292,344 307,353 315,357 330,366 338,371 352,379 368,386 383,392 406,400 421,405 436,406 451,409 473,407 481,408 489,411 512,415 527,416 565,418 595,420 618,421 647,423 671,423 686,423 720,424 743,423 787,423 815,425 838,426 868,431 891,433 921,435 937,437 959,441 977,443 1000,450 1020,455 1041,462 1057,467 1088,475 1118,481 1158,492 1179,496 1208,505 1232,515 1247,519 1263,521 1278,525 1300,528 1323,529 1353,532 1376,533 1399,532 1414,530';
const ma144 = '49,321 57,324 72,325 95,327 140,330 200,332 208,333 253,333 284,334 317,335 350,339 373,341 400,346 436,350 481,353 500,354 542,357 620,358 657,360 713,365 747,367 770,371 800,373 847,383 868,386 891,392 921,396 944,400 982,408 1000,412 1033,420 1080,429 1128,437 1156,439 1179,444 1208,451 1232,457 1253,462 1278,467 1303,471 1333,474 1360,475 1383,477 1405,477 1414,475';
const ma900 = '49,98 70,98 80,99 133,99 140,100 225,100 235,101 284,102 316,104 380,107 436,109 480,110 500,110 545,112 595,113 655,115 747,118 868,123 921,124 982,126 1033,127 1080,130 1148,133 1200,137 1245,140 1300,144 1350,147 1414,152';
const dif = '49,833 57,832 64,815 72,796 80,790 87,782 95,775 102,768 118,768 125,767 133,765 140,764 148,762 155,754 163,750 171,751 178,749 186,756 193,760 201,765 208,763 216,767 224,775 231,778 239,784 246,792 254,799 262,804 269,803 277,798 284,791 292,788 299,786 307,790 315,794 322,796 330,801 345,801 352,795 360,789 368,788 375,783 383,781 406,781 413,776 421,769 428,763 436,759 444,759 451,757 459,755 466,751 481,752 489,757 497,761 504,755 512,752 519,748 527,745 534,739 542,739 550,738 557,734 565,730 572,729 580,731 587,735 595,737 603,741 610,747 618,750 625,752 633,757 641,761 648,765 656,776 663,785 678,787 686,785 694,789 709,789 716,784 732,781 739,783 747,786 754,789 762,790 769,790 777,789 792,787 800,789 815,782 838,782 845,784 860,780 868,781 876,777 883,769 891,763 898,759 906,758 913,756 929,756 936,758 951,759 959,761 966,756 974,753 982,756 989,756 1004,761 1012,765 1020,770 1027,775 1035,778 1050,785 1057,791 1065,796 1073,796 1080,799 1088,792 1095,786 1103,782 1111,782 1118,784 1126,783 1133,785 1148,783 1156,781 1171,783 1179,784 1186,794 1194,801 1201,801 1209,800 1217,802 1224,804 1232,802 1239,797 1247,797 1255,787 1262,776 1270,768 1277,767 1285,765 1292,754 1300,739 1308,724 1315,715 1323,710 1330,714 1338,721 1345,727 1353,731 1361,733 1368,732 1376,737 1383,727 1391,721 1399,717 1406,719 1414,711';
const dea = '49,812 57,816 64,816 72,812 80,808 87,804 102,792 118,783 140,775 148,772 155,768 163,765 171,763 178,759 186,758 208,760 224,765 239,771 254,779 269,788 277,790 307,789 322,791 338,795 348,796 368,793 383,789 406,785 421,780 436,773 451,767 474,760 481,758 497,759 512,757 527,754 534,751 550,747 557,743 565,742 572,739 587,736 603,737 618,741 625,745 633,747 648,753 656,757 663,763 678,771 694,777 709,781 732,781 754,783 769,786 800,787 822,785 853,784 876,781 883,779 898,772 913,767 929,763 936,761 959,761 974,759 990,758 1012,760 1020,762 1035,767 1050,774 1065,780 1080,786 1095,788 1111,785 1143,785 1179,783 1194,788 1201,791 1217,795 1224,797 1247,797 1255,795 1270,787 1277,783 1285,779 1292,775 1300,767 1315,749 1323,742 1330,737 1338,733 1353,731 1376,732 1391,730 1399,726 1406,725 1414,722';
const history = '46,907 60,906 85,905 100,905 107,906 120,906 150,904 155,901 167,899 185,899 193,897 200,894 215,893 220,891 232,892 238,896 255,900 262,903 280,901 290,898 310,898 318,903 335,904 360,902 370,903 385,904 400,902 428,899 440,900 460,899 500,899 523,898 533,899 550,894 567,891 580,890 587,888 603,888 617,883 625,876 632,880 640,877 647,873 652,870 663,876 670,876 676,872 682,877 695,880 717,879 723,883 743,881 753,879 760,877 773,879 783,878 800,881 805,884 817,879 827,875 837,873 847,869 857,869 867,875 883,868 893,869 900,873 920,869 927,871 937,869 947,870 963,869 973,866 980,869 988,869 997,873 1001,880 1020,877 1033,876 1047,874 1049,870 1067,874 1100,873 1117,867 1130,867 1134,863 1140,868 1163,865 1177,869 1187,872 1200,872 1227,881 1247,888 1260,884 1290,887 1308,880 1320,885 1337,887 1353,891 1370,887 1383,890 1403,890 1417,894 1425,897 1437,891 1440,890';

const months = [[148, '2022/04'], [284, '5'], [436, '6'], [595, '7'], [747, '8'], [921, '9'], [1080, '10'], [1232, '11'], [1399, '12']];
const years = [154, 317, 478, 640, 801, 963, 1126, 1289];
const marks = [0,2,7,8,9,13,20,25,27,30,34,35,36,37,38,51,57,59,66,67,72,80,83,92,100,101,102,104,108,112,115,123,127,135,141,142,145,150,151,152,156,157,164,178];
const events = [[64, 'E'], [277, 'E'], [436, 'Q'], [868, 'E'], [1012, 'Q'], [1201, 'E']];
const prices = ['74.176','72.134','70.093','68.051','66.009','63.968','61.926','59.884','57.842','55.801','53.759','51.717','49.675','47.634','45.592','43.550','41.509','39.467','37.425','35.383','33.342','31.300'];

const xOf = i => Math.floor(49.7 + i * 7.583) + 0.5;
const line = (x1, y1, x2, y2, cls) => `<line x1="${x1}" y1="${y1}" x2="${x2}" y2="${y2}" class="${cls}"/>`;
const text = (x, y, s, cls = '') => `<text x="${x}" y="${y}" class="${cls}">${s}</text>`;
const poly = (pts, cls) => `<polyline points="${pts}" class="${cls}"/>`;

// Grafico de precos
function drawPrice() {
    let s = '<rect x="46.5" y="72.5" width="1394" height="588" class="grid"/>';
    months.forEach(m => s += line(m[0] + 0.5, 73, m[0] + 0.5, 660, 'grid'));
    prices.forEach((p, i) => {
        const y = 89.5 + i * 26;
        s += line(47, y, 1440, y, 'grid') + text(3, y + 4, p) + text(1450, y + 4, p);
    });
    s += '<rect x="0" y="378" width="46" height="18" class="now-box"/><rect x="1441" y="378" width="60" height="18" class="now-box"/>';
    s += text(4, 391, '50.800', 'now') + text(1449, 391, '50.800', 'now');
    marks.forEach(i => {
        const x = xOf(i);
        s += `<path class="diamond" d="M${x - 3} 76.5l3-3 3 3-3 3z"/>`;
    });
    candles.forEach(([h, o, c, l], i) => {
        const x = xOf(i), up = c < o, top = Math.min(o, c), bot = Math.max(o, c), cls = up ? 'candle-up' : 'candle-down';
        s += line(x, h, x, top, cls) + line(x, bot, x, l + 1, cls);
        s += `<rect x="${x - 2}" y="${top + 0.5}" width="4" height="${Math.max(bot - top, 1)}" class="${cls}"/>`;
    });
    s += poly(candles.map((c, i) => xOf(i) + ',' + (c[2] + 0.5)).join(' '), 'ma-close');
    s += poly(ma900, 'ma-900') + poly(ma144, 'ma-144') + poly(ma55, 'ma-55');
    s += line(46, 387.5, 1440, 387.5, 'now-line');
    s += line(173, 307, 192, 302, 'leader') + text(193, 304, '56.784');
    s += line(1225, 636, 1253, 645, 'leader') + text(1254, 649, '31.300');
    events.forEach(([x, t]) => s += `<g class="event"><circle cx="${x}" cy="652" r="6.5"/>${text(x, 656, t)}</g>`);

    // anotacoes feitas a mao
    s += text(491, 221, '日线加速上涨，支撑46元，压力56元', 'note');
    s += '<ellipse cx="1393" cy="445" rx="117" ry="5" class="ring"/>';
    s += line(1348, 523, 1400, 368, 'ink') + line(1403, 360, 1436, 399, 'ink') + line(1442, 405, 1469, 276, 'ink');
    s += '<path class="ink-head" d="M1402 360l-10 10 13 4zM1442 406l-14-4 12-10zM1471 268l-9 10 15 3z"/>';
    document.getElementById('price').innerHTML = s;
}

// MACD, datas e navegador
function drawMacd() {
    let s = '<rect x="46.5" y="685.5" width="1394" height="155" class="grid"/>';
    months.forEach(m => s += line(m[0] + 0.5, 686, m[0] + 0.5, 840, 'grid') + text(m[0] + 2, 854, m[1]));
    ['1.81', '1.03', '0.26', '-0.52', '-1.29', '-2.07'].forEach((v, i) => {
        const y = 703.5 + i * 26;
        s += line(47, y, 1440, y, 'grid') + `<text x="36" y="${y + 4}" text-anchor="end">${v}</text>` + text(1449, y + 4, v);
    });
    hist.forEach((h, i) => {
        if (h) s += line(xOf(i), 764.5, xOf(i), 764.5 - h, h > 0 ? 'candle-up' : 'candle-down');
    });
    s += poly(dif, 'ma-55') + poly(dea, 'ma-144');
    s += '<rect x="46.5" y="859.5" width="1394" height="49" class="grid"/>';
    years.forEach(x => s += line(x + 0.5, 860, x + 0.5, 908, 'grid'));
    s += `<polygon class="area" points="46,908 ${history} 1440,908"/>`;
    s += '<rect x="1320" y="860" width="120" height="48" class="brush"/>';
    s += '<path class="handle" d="M1326 884.5h-5M1323 882l-2.5 2.5 2.5 2.5M1434 884.5h5M1437 882l2.5 2.5-2.5 2.5"/>';
    years.forEach((x, i) => s += text(x, 907, 2015 + i, 'mid'));
    document.getElementById('macd').innerHTML = s;
}

// Livro de ofertas
const bids = [['50.750','231K','91)'],['50.700','124K','39)'],['50.650','132.5K','18)'],['50.600','123.5K','17)'],['50.550','88.5K','8)'],['50.500','229.5K','19)'],['50.450','14K','5)'],['50.400','39K','7)'],['50.350','500','1)'],['50.300','30.5K','8)']];
const asks = [['50.800','123.5K',''],['50.850','388K',''],['50.900','181.5K',''],['50.950','342K',''],['51.000','1.11M','317)'],['51.050','136K',''],['51.100','136.5K',''],['51.150','68K',''],['51.200','165.5K',''],['51.250','15K','']];

function drawBook(id, rows) {
    document.getElementById(id).innerHTML = rows.map((r, i) => {
        const hit = id === 'asks' && i === 1 ? ' hit' : '';
        return `<tr><td class="no"><span>${i + 1}</span></td><td class="px">${r[0]}</td><td class="qty${hit}">${r[1]}(</td><td class="${hit}">${r[2]}</td></tr>`;
    }).join('');
}

drawPrice();
drawMacd();
drawBook('bids', bids);
drawBook('asks', asks);
```
